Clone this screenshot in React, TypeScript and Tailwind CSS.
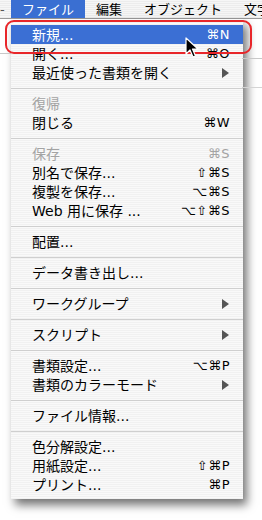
import React from "react";

type Item =
  | { sep: true }
  | { label: string; key?: string; sub?: boolean; off?: boolean; hot?: boolean; sep?: false };

const items: Item[] = [
  { label: "新規...", key: "⌘N", hot: true },
  { label: "開く...", key: "⌘O" },
  { label: "最近使った書類を開く", sub: true },
  { sep: true },
  { label: "復帰", off: true },
  { label: "閉じる", key: "⌘W" },
  { sep: true },
  { label: "保存", key: "⌘S", off: true },
  { label: "別名で保存...", key: "⇧⌘S" },
  { label: "複製を保存...", key: "⌥⌘S" },
  { label: "Web 用に保存 ...", key: "⌥⇧⌘S" },
  { sep: true },
  { label: "配置..." },
  { sep: true },
  { label: "データ書き出し..." },
  { sep: true },
  { label: "ワークグループ", sub: true },
  { sep: true },
  { label: "スクリプト", sub: true },
  { sep: true },
  { label: "書類設定...", key: "⌥⌘P" },
  { label: "書類のカラーモード", sub: true },
  { sep: true },
  { label: "ファイル情報..." },
  { sep: true },
  { label: "色分解設定..." },
  { label: "用紙設定...", key: "⇧⌘P" },
  { label: "プリント...", key: "⌘P" },
];

const Arrow = () => (
  <svg width="8" height="10" viewBox="0 0 8 10">
    <path d="M1 0 L8 5 L1 10 Z" fill="#555" />
  </svg>
);

// mac style arrow pointer
const Cursor = () => (
  <svg width="14" height="22" viewBox="0 0 14 22">
    <path
      d="M1 1 L1 17 L5 13 L8 20 L10.5 19 L7.5 12 L13 12 Z"
      fill="#000"
      stroke="#fff"
      strokeWidth="1.2"
      strokeLinejoin="round"
    />
  </svg>
);

export default function App() {
  return (
    <div className="relative w-[262px] h-[520px] overflow-hidden bg-white text-black font-['DejaVu_Sans','Noto_Sans_CJK_JP',sans-serif]">
      {/* window behind */}
      <div className="absolute left-0 top-[53px] w-[11px] h-px bg-[#c8c8c8]" />
      <div className="absolute right-0 top-[58px] w-[20px] h-px bg-[#c8c8c8]" />
      <div className="absolute right-0 top-[87px] w-[20px] h-px bg-[#d4d4d4]" />

      {/* menu bar */}
      <div className="flex h-[19px] items-center whitespace-nowrap text-[13px] leading-none bg-[repeating-linear-gradient(0deg,#ececec_0px,#ececec_1px,#f6f6f6_1px,#f6f6f6_2px)] border-b border-[#9a9a9a]">
        <span className="w-[11px] shrink-0 text-[#555] overflow-hidden">-</span>
        <div className="h-full shrink-0 flex items-center px-[11px] bg-[#3a6fd2] text-white">ファイル</div>
        <div className="h-full shrink-0 flex items-center px-[11px]">編集</div>
        <div className="h-full shrink-0 flex items-center px-[11px]">オブジェクト</div>
        <div className="h-full shrink-0 flex items-center px-[11px]">文字</div>
      </div>

      {/* file menu */}
      <div className="ml-[11px] w-[232px] pt-[6px] pb-[5px] bg-[repeating-linear-gradient(0deg,#f1f1f1_0px,#f1f1f1_1px,#f9f9f9_1px,#f9f9f9_2px)] shadow-[4px_6px_9px_rgba(0,0,0,0.55)]">
        {items.map((it, i) =>
          it.sep ? (
            <div key={i} className="h-[12px] flex items-center">
              <div className="w-full h-px bg-[#cfcfcf]" />
            </div>
          ) : (
            <div
              key={i}
              className={
                "h-[19px] flex items-center justify-between pl-[21px] pr-[13px] text-[14px] leading-none " +
                (it.hot ? "bg-[#3b6fd4] text-white " : "") +
                (it.off ? "text-[#a3a3a3]" : "")
              }
            >
              <span>{it.label}</span>
              {it.key && <span className="text-[13px] font-medium tracking-[0.5px]">{it.key}</span>}
              {it.sub && (
                <span className="pr-px">
                  <Arrow />
                </span>
              )}
            </div>
          )
        )}
      </div>

      {/* red annotation outline */}
      <div className="absolute left-[5px] top-[20px] w-[247px] h-[34px] rounded-[9px] border-2 border-[#e8262a]" />

      {/* pointer */}
      <div className="absolute left-[185px] top-[37px]">
        <Cursor />
      </div>
    </div>
  );
}
